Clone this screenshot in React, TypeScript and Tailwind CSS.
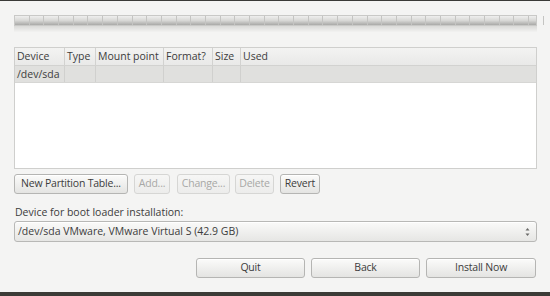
import React from "react";

const font = { fontFamily: '"Open Sans", "DejaVu Sans", sans-serif' };

function Btn({ children, disabled, className = "" }: { children: React.ReactNode; disabled?: boolean; className?: string }) {
  return (
    <div
      className={
        "flex h-[20px] items-center justify-center whitespace-nowrap rounded-[3px] border bg-gradient-to-b text-[10.5px] tracking-[-0.2px] " +
        (disabled
          ? "border-[#d6d6d4] from-[#f6f6f5] to-[#ececeb] text-[#a8a8a6]"
          : "border-[#b5b5b3] from-[#fbfbfa] to-[#e4e4e2] text-[#3c3c3c] shadow-[inset_0_1px_0_#ffffff]") +
        " " +
        className
      }
    >
      {children}
    </div>
  );
}

const cols = [
  { label: "Device", w: "w-[50px]" },
  { label: "Type", w: "w-[31px]" },
  { label: "Mount point", w: "w-[68px]" },
  { label: "Format?", w: "w-[49px]" },
  { label: "Size", w: "w-[28px]" },
];

export default function App() {
  const ticks = Array.from({ length: 36 }, (_, i) => i);
  return (
    <div
      style={font}
      className="flex h-[296px] w-[550px] flex-col overflow-hidden border-t border-b-[4px] border-t-[#3a3a37] border-b-[#3c3b37] bg-[#f4f4f3] pl-[14px] pr-[13px] text-[#3c3c3c]"
    >
      {/* disk bar */}
      <div className="mt-[14px] flex h-[17px] flex-col">
        <div className="relative flex h-[11px] border border-[#c9c9c7] bg-gradient-to-b from-[#efefee] via-[#d8d8d6] to-[#a9a9a7]">
          {ticks.map((i) => (
            <div key={i} className="h-full w-[14.7px] shrink-0 border-r border-[#c4c4c2]" />
          ))}
        </div>
        <div className="h-[6px] bg-gradient-to-b from-[#dadad8] to-[#f2f2f1]" />
      </div>

      {/* table */}
      <div className="mt-[15px] flex h-[122px] flex-col border border-[#cfcfcd] bg-white">
        <div className="flex h-[18px] border-b border-[#d2d2d0] bg-gradient-to-b from-[#f3f3f2] to-[#e9e9e8] text-[10.5px] leading-[17px]">
          {cols.map((c) => (
            <div key={c.label} className={c.w + " shrink-0 whitespace-nowrap border-r border-[#d2d2d0] pl-[2px]"}>
              {c.label}
            </div>
          ))}
          <div className="flex-1 pl-[2px]">Used</div>
        </div>
        <div className="flex h-[17px] border-b border-[#d6d6d4] bg-[#e0e0de] text-[10.5px] leading-[16px]">
          {cols.map((c, i) => (
            <div key={c.label} className={c.w + " shrink-0 border-r border-[#d0d0ce] pl-[2px]"}>
              {i === 0 ? "/dev/sda" : ""}
            </div>
          ))}
          <div className="flex-1" />
        </div>
        <div className="flex-1" />
      </div>

      {/* action buttons */}
      <div className="mt-[5px] flex gap-[5px]">
        <Btn className="w-[114px]">New Partition Table...</Btn>
        <Btn disabled className="ml-[1px] w-[36px]">Add...</Btn>
        <Btn disabled className="ml-[2px] w-[53px]">Change...</Btn>
        <Btn disabled className="w-[39px]">Delete</Btn>
        <Btn className="ml-[1px] w-[40px]">Revert</Btn>
      </div>

      <div className="mt-[10px] pl-[1px] text-[10.5px] leading-[16px]">Device for boot loader installation:</div>

      {/* combo */}
      <div className="mt-[1px] flex h-[21px] items-center justify-between rounded-[3px] border border-[#b8b8b6] bg-gradient-to-b from-[#fafaf9] to-[#e6e6e4] pl-[3px] pr-[6px] text-[10.5px] shadow-[inset_0_1px_0_#ffffff]">
        <span>/dev/sda VMware, VMware Virtual S (42.9 GB)</span>
        <svg width="5" height="10" viewBox="0 0 5 10">
          <path d="M2.5 1 L4.5 3.5 L0.5 3.5 Z" fill="#6a6a68" />
          <path d="M2.5 9 L4.5 6.5 L0.5 6.5 Z" fill="#6a6a68" />
        </svg>
      </div>

      {/* bottom buttons */}
      <div className="mt-[16px] flex justify-end gap-[6px] pr-[1px]">
        <Btn className="w-[109px]">Quit</Btn>
        <Btn className="w-[109px]">Back</Btn>
        <Btn className="w-[110px]">Install Now</Btn>
      </div>
    </div>
  );
}
